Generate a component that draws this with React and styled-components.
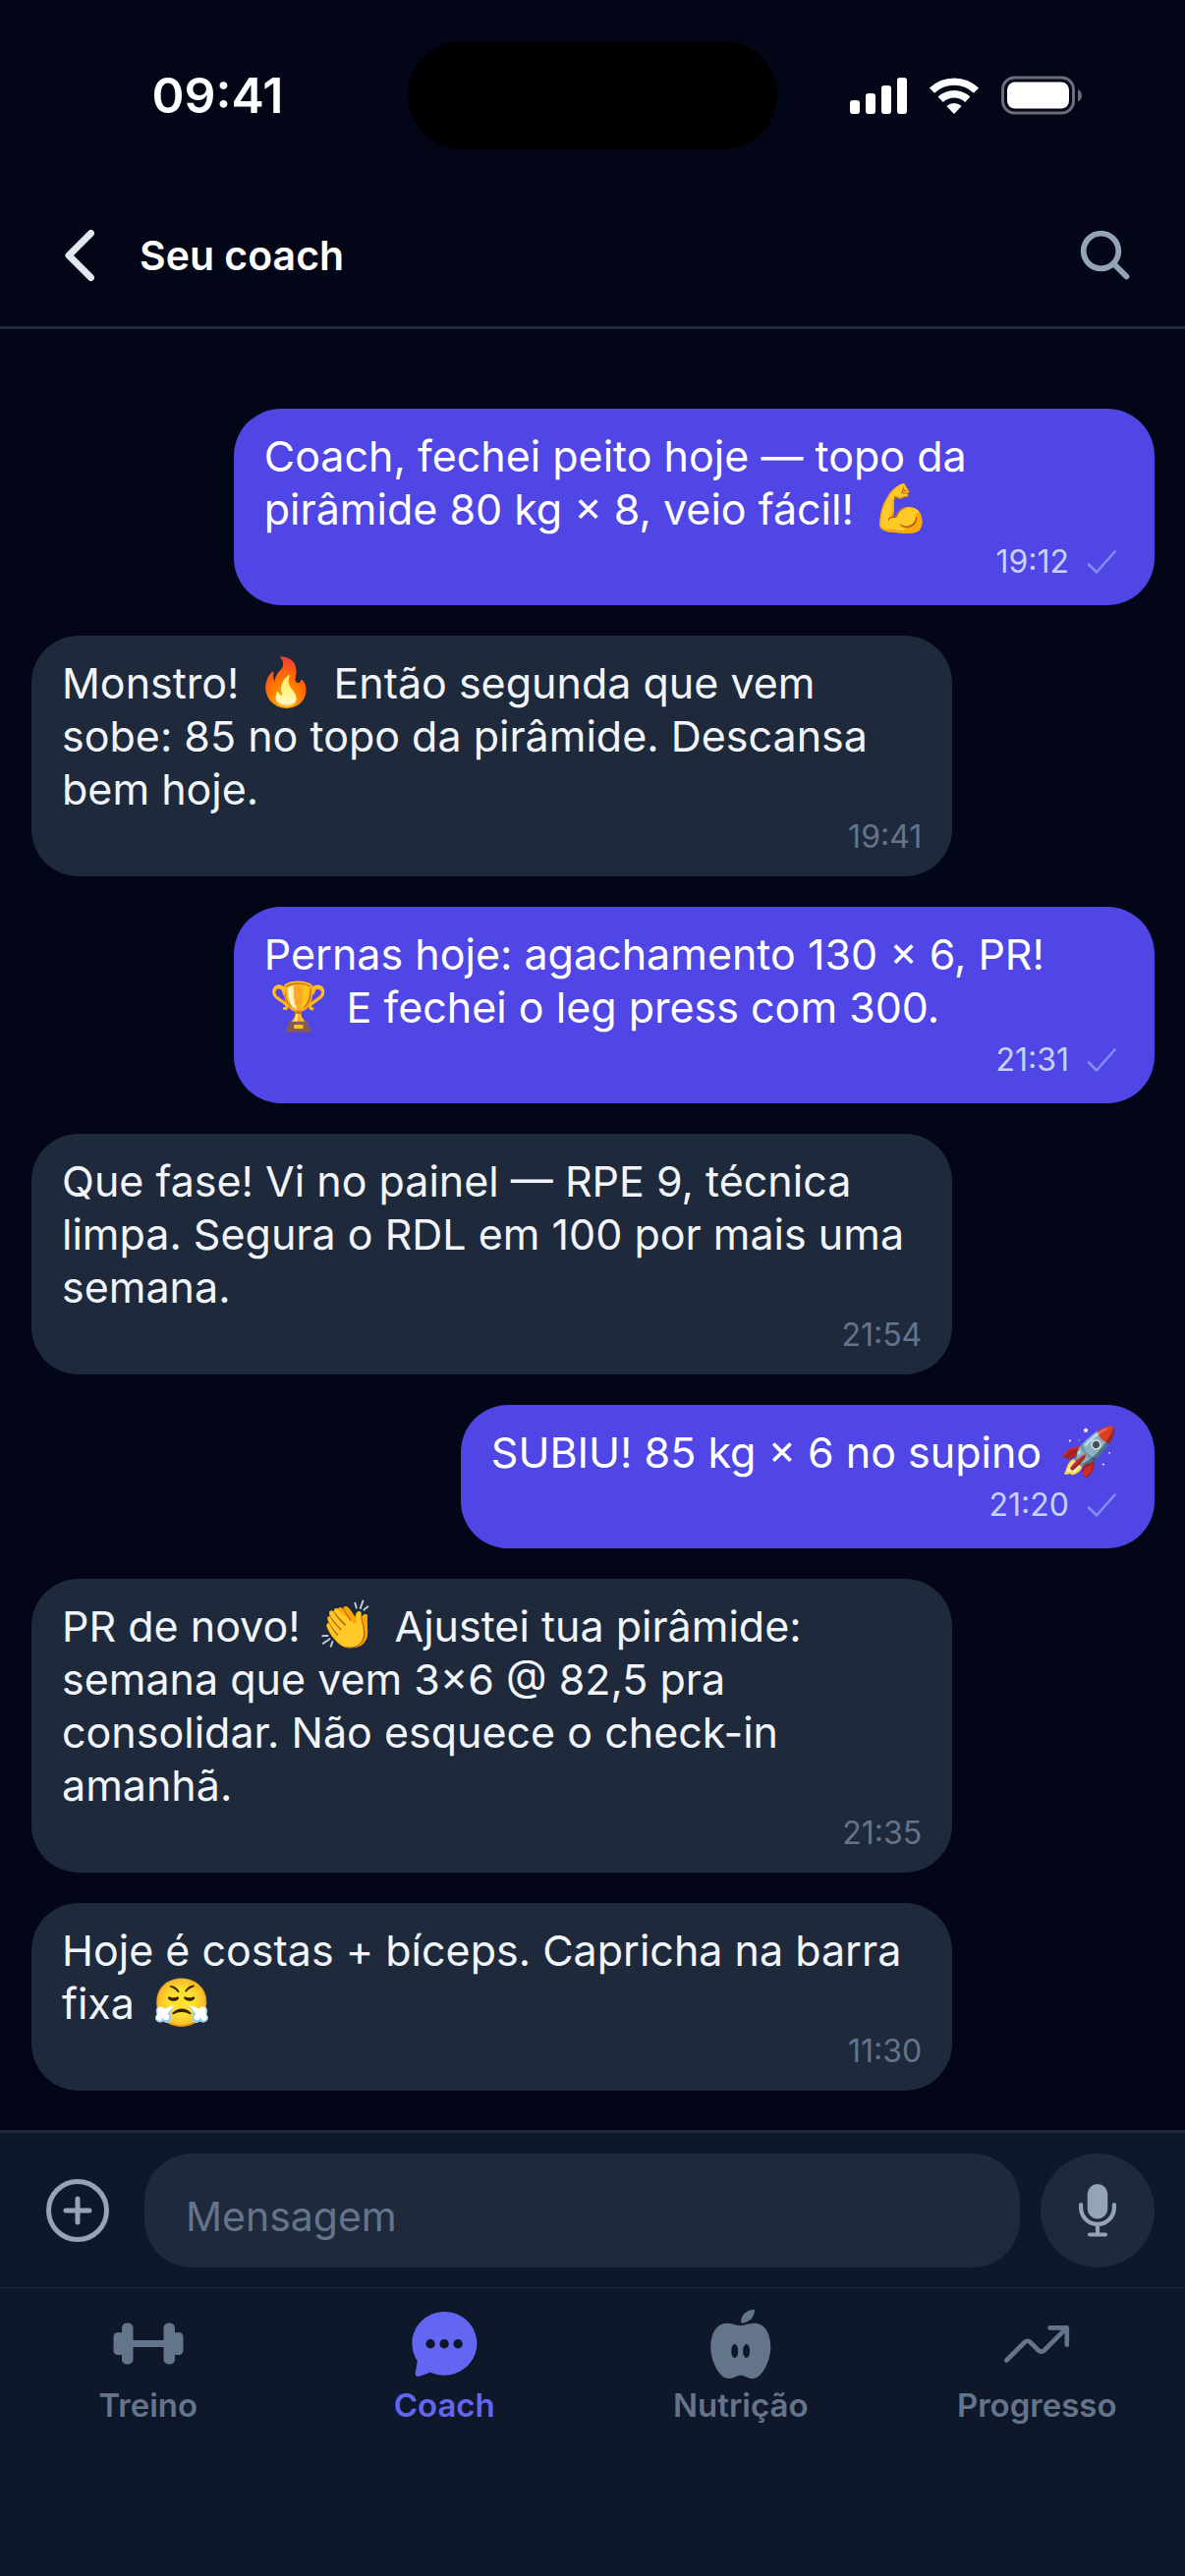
import React from "react";
import styled, { createGlobalStyle } from "styled-components";

const Global = createGlobalStyle`
  * { box-sizing: border-box; }
  html, body, #root { height: 100%; }
  body {
    margin: 0;
    background: #020617;
    color: #fff;
    font-family: Inter, "Liberation Sans", "Noto Color Emoji", sans-serif;
    -webkit-font-smoothing: antialiased;
  }
  button, input { font: inherit; color: inherit; border: 0; padding: 0; background: none; }
`;

const Screen = styled.div`
  display: flex;
  flex-direction: column;
  min-height: 100%;
`;

const StatusBar = styled.div`
  display: grid;
  grid-template-columns: 1fr 376px 1fr;
  align-items: center;
  padding: 42px 0 0;
`;
const Clock = styled.time`
  font-size: 50px;
  font-weight: 600;
  line-height: 60px;
  padding-left: 28px;
  text-align: center;
`;
const Island = styled.div`
  height: 110px;
  border-radius: 55px;
  background: #000;
`;
const StatusIcons = styled.div`
  display: flex;
  align-items: center;
  justify-content: center;
  gap: 22px;
  padding-right: 32px;
`;

const Header = styled.header`
  display: flex;
  align-items: center;
  gap: 40px;
  height: 183px;
  padding: 68px 54px 32px 60px;
  border-bottom: 3px solid #1e293b;
`;
const IconButton = styled.button`
  display: flex;
  align-items: center;
  justify-content: center;
  flex: none;
  width: ${(p) => p.$size}px;
  height: ${(p) => p.$size}px;
  border-radius: 50%;
  background: ${(p) => (p.$filled ? "#1e293b" : "none")};
`;
const Title = styled.h1`
  flex: 1;
  margin: 0;
  font-size: 41px;
  font-weight: 600;
  line-height: 54px;
`;

const Thread = styled.ol`
  flex: 1;
  display: flex;
  flex-direction: column;
  gap: 31px;
  margin: 0;
  padding: 81px 31px 40px 32px;
  list-style: none;
`;
const Bubble = styled.li`
  align-self: ${(p) => (p.$mine ? "flex-end" : "flex-start")};
  max-width: 82%;
  padding: 21px 31px;
  border-radius: 48px;
  background: ${(p) => (p.$mine ? "#4f46e5" : "#1e293b")};
  color: ${(p) => (p.$mine ? "#fff" : "#f1f5f9")};
`;
const Text = styled.p`
  margin: 0;
  font-size: 43px;
  line-height: 54px;
`;
const Emoji = styled.span`
  margin: 0 6px;
  font-size: 48px;
  line-height: 1;
`;
const Meta = styled.div`
  display: flex;
  align-items: center;
  justify-content: flex-end;
  gap: 18px;
  height: ${(p) => (p.$mine ? 50 : 41)}px;
  padding-top: 3px;
  padding-right: ${(p) => (p.$mine ? 8 : 0)}px;
  color: ${(p) => (p.$mine ? "#c7d2fe" : "#64748b")};
  font-size: 32px;
  line-height: 38px;
`;

const Composer = styled.form`
  display: flex;
  align-items: center;
  gap: 21px;
  padding: 21px 31px 20px 32px;
  border-top: 3px solid #1e293b;
  background: #0f172a;
`;
const MessageInput = styled.input`
  flex: 1;
  min-width: 0;
  height: 116px;
  padding: 12px 42px 0;
  border-radius: 48px;
  background: #1e293b;
  font-size: 41px;
  outline: none;
  &::placeholder { color: #64748b; opacity: 1; }
`;

const TabBar = styled.nav`
  display: grid;
  grid-template-columns: repeat(4, 1fr);
  height: 294px;
  padding-top: 20px;
  border-top: 1px solid #1e293b;
  background: #0f172a;
`;
const Tab = styled.a`
  display: flex;
  flex-direction: column;
  align-items: center;
  gap: 7px;
  color: ${(p) => (p.$active ? "#6366f1" : "#64748b")};
  font-size: 33px;
  font-weight: 600;
  line-height: 40px;
  text-decoration: none;
`;

const Signal = () => (
  <svg width="58" height="38" viewBox="0 0 58 38" fill="#fff" aria-hidden="true">
    <rect x="0" y="24" width="10" height="14" rx="3" />
    <rect x="16" y="17" width="10" height="21" rx="3" />
    <rect x="32" y="9" width="10" height="29" rx="3" />
    <rect x="48" y="1" width="10" height="37" rx="3" />
  </svg>
);
const Wifi = () => (
  <svg width="52" height="38" viewBox="0 0 52 38" fill="none" stroke="#fff" strokeWidth="7.4" aria-hidden="true">
    <path d="M3.5 14.2a32.5 32.5 0 0 1 45 0" />
    <path d="M12.2 23.2a20 20 0 0 1 27.6 0" />
    <path d="M18.4 30a11.2 11.2 0 0 1 15.2 0L26.8 37.3a1.2 1.2 0 0 1-1.6 0z" fill="#fff" stroke="none" />
  </svg>
);
const Battery = () => (
  <svg width="82" height="40" viewBox="0 0 82 40" fill="none" aria-hidden="true">
    <rect x="1.5" y="2" width="72" height="36" rx="12" stroke="#6b6d78" strokeWidth="3" />
    <rect x="6" y="6.5" width="63" height="27" rx="8" fill="#fff" />
    <path d="M78 14c5.3 2 5.3 10.5 0 12.5z" fill="#6b6d78" />
  </svg>
);
const Back = () => (
  <svg width="42" height="60" viewBox="0 0 42 60" fill="none" stroke="#e2e8f0" strokeWidth="7" strokeLinecap="round" strokeLinejoin="round" aria-hidden="true">
    <path d="M32.5 7.5 10 30 32.5 52.5" />
  </svg>
);
const Search = () => (
  <svg width="54" height="54" viewBox="0 0 54 54" fill="none" stroke="#94a3b8" strokeWidth="5.8" strokeLinecap="round" aria-hidden="true">
    <circle cx="22.5" cy="22.5" r="17.8" />
    <path d="M36 36l12.5 12.5" />
  </svg>
);
const Check = () => (
  <svg width="30" height="24" viewBox="0 0 30 24" fill="none" stroke="#818cf8" strokeWidth="2.6" strokeLinecap="round" strokeLinejoin="round" aria-hidden="true">
    <path d="M2 14.5 10 22.5 28.5 1.5" />
  </svg>
);
const Plus = () => (
  <svg width="64" height="64" viewBox="0 0 64 64" fill="none" stroke="#94a3b8" strokeWidth="5" strokeLinecap="round" aria-hidden="true">
    <circle cx="32" cy="32" r="29.5" />
    <path d="M32 20v24M20 32h24" />
  </svg>
);
const Mic = () => (
  <svg width="40" height="56" viewBox="0 0 40 56" fill="none" stroke="#94a3b8" strokeWidth="4.2" strokeLinecap="round" aria-hidden="true">
    <rect x="9.7" y="1" width="20.6" height="35.6" rx="10.3" fill="#94a3b8" stroke="none" />
    <path d="M3.1 22v3a16.9 16.9 0 0 0 33.8 0V22M20 42v10.5M12 52.5h16" />
  </svg>
);
const Dumbbell = () => (
  <svg width="72" height="72" viewBox="0 0 72 72" fill="currentColor" aria-hidden="true">
    <rect x="0.5" y="25" width="11" height="23" rx="4.5" />
    <rect x="9" y="15.5" width="11.5" height="42" rx="5" />
    <rect x="18" y="33" width="36" height="7" />
    <rect x="51.5" y="15.5" width="11.5" height="42" rx="5" />
    <rect x="60.5" y="25" width="11" height="23" rx="4.5" />
  </svg>
);
const Chat = () => (
  <svg width="72" height="72" viewBox="0 0 72 72" fill="currentColor" aria-hidden="true">
    <path d="M36.4 4c18.2 0 33 14.4 33 32.3S54.6 68.7 36.4 68.7c-4.9 0-9.7-.9-14.4-3L11.5 69.6c-3 1-5.2-.4-4.9-3.2L8.8 54.3C5.3 49 3.4 43 3.4 36.3 3.4 18.4 18.2 4 36.4 4z" />
    <g fill="#0f172a">
      <circle cx="22.1" cy="36.7" r="4.7" />
      <circle cx="36.1" cy="36.7" r="4.7" />
      <circle cx="50.1" cy="36.7" r="4.7" />
    </g>
  </svg>
);
const Apple = () => (
  <svg width="72" height="72" viewBox="0 0 72 72" fill="currentColor" aria-hidden="true">
    <path d="M49.9 1.7c.4 7.5-5.5 14-13.4 14C34.7 8.8 41.5 1.7 49.9 1.7z" />
    <path d="M35.8 18C40 18 44.5 15.7 49.6 15.7 60.5 15.7 66.3 26 66.3 40.3 66.3 54 57.5 72 48.3 72 42 72 40 68.7 35.8 68.7S29.5 72 23.2 72C14 72 5.3 54 5.3 40.3 5.3 26 11.1 15.7 22 15.7 27.1 15.7 31.6 18 35.8 18z" />
    <ellipse cx="29.7" cy="44" rx="3.5" ry="7.1" fill="#0f172a" />
    <ellipse cx="41.6" cy="44" rx="3.5" ry="7.1" fill="#0f172a" />
  </svg>
);
const Trend = () => (
  <svg width="72" height="72" viewBox="0 0 72 72" fill="none" stroke="currentColor" strokeWidth="4.6" strokeLinecap="round" strokeLinejoin="round" aria-hidden="true">
    <path d="M5.3 53.5 23.3 35.5q3.4-3.3 6.7 0l7.5 7.5q3.3 3.3 6.6 0L66.7 20.4M49.6 20.4h17.2v17.4" />
  </svg>
);

const messages = [
  { mine: true, time: "19:12", text: "Coach, fechei peito hoje — topo da pirâmide 80 kg × 8, veio fácil! 💪" },
  { time: "19:41", text: "Monstro! 🔥 Então segunda que vem sobe: 85 no topo da pirâmide. Descansa bem hoje." },
  { mine: true, time: "21:31", text: "Pernas hoje: agachamento 130 × 6, PR! 🏆 E fechei o leg press com 300." },
  { time: "21:54", text: "Que fase! Vi no painel — RPE 9, técnica limpa. Segura o RDL em 100 por mais uma semana." },
  { mine: true, time: "21:20", text: "SUBIU! 85 kg × 6 no supino 🚀" },
  { time: "21:35", text: "PR de novo! 👏 Ajustei tua pirâmide: semana que vem 3×6 @ 82,5 pra consolidar. Não esquece o check-in amanhã." },
  { time: "11:30", text: "Hoje é costas + bíceps. Capricha na barra fixa 😤" },
];

const tabs = [
  { label: "Treino", Icon: Dumbbell },
  { label: "Coach", Icon: Chat, active: true },
  { label: "Nutrição", Icon: Apple },
  { label: "Progresso", Icon: Trend },
];

// Emoji are set a little larger than the words around them.
const withEmoji = (text) =>
  text
    .split(/(\p{Extended_Pictographic})/u)
    .map((part, i) => (i % 2 ? <Emoji key={i}>{part}</Emoji> : part));

export default function App() {
  return (
    <>
      <Global />
      <Screen>
        <StatusBar>
          <Clock>09:41</Clock>
          <Island />
          <StatusIcons>
            <Signal />
            <Wifi />
            <Battery />
          </StatusIcons>
        </StatusBar>
        <Header>
          <IconButton type="button" aria-label="Voltar" $size={42}><Back /></IconButton>
          <Title>Seu coach</Title>
          <IconButton type="button" aria-label="Buscar" $size={54}><Search /></IconButton>
        </Header>
        <Thread>
          {messages.map((m) => (
            <Bubble key={m.time} $mine={m.mine}>
              <Text>{withEmoji(m.text)}</Text>
              <Meta $mine={m.mine}>
                <time>{m.time}</time>
                {m.mine && <Check />}
              </Meta>
            </Bubble>
          ))}
        </Thread>
        <Composer onSubmit={(e) => e.preventDefault()}>
          <IconButton type="button" aria-label="Anexar" $size={94}><Plus /></IconButton>
          <MessageInput type="text" aria-label="Mensagem" placeholder="Mensagem" />
          <IconButton type="button" aria-label="Gravar áudio" $size={116} $filled><Mic /></IconButton>
        </Composer>
        <TabBar>
          {tabs.map(({ label, Icon, active }) => (
            <Tab key={label} href="#" $active={active} aria-current={active ? "page" : undefined}>
              <Icon />
              {label}
            </Tab>
          ))}
        </TabBar>
      </Screen>
    </>
  );
}
